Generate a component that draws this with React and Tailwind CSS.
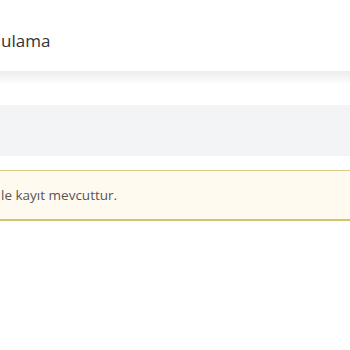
export default function App() {
  return (
    <div className="w-[350px] h-[350px] bg-white overflow-hidden" style={{ fontFamily: '"Open Sans", sans-serif' }}>
      <div className="h-[71px] pt-[29px] pl-[1px]">
        <div className="text-[17px] leading-[24px] text-[#333] whitespace-nowrap">ulama</div>
      </div>
      <div className="h-[14px] bg-gradient-to-b from-[#ececec] to-white" />
      <div className="h-[20px]" />
      <div className="h-[51px] bg-[#f3f4f6]" />
      <div className="h-[14px]" />
      <div className="h-[51px] bg-[#fffaf0] border-t-[1px] border-b-[2px] border-t-[#dccb85] border-b-[#d6c26c] flex items-center pl-[1px]">
        <span className="text-[13.5px] text-[#555] whitespace-nowrap">le kayıt mevcuttur.</span>
      </div>
    </div>
  );
}
